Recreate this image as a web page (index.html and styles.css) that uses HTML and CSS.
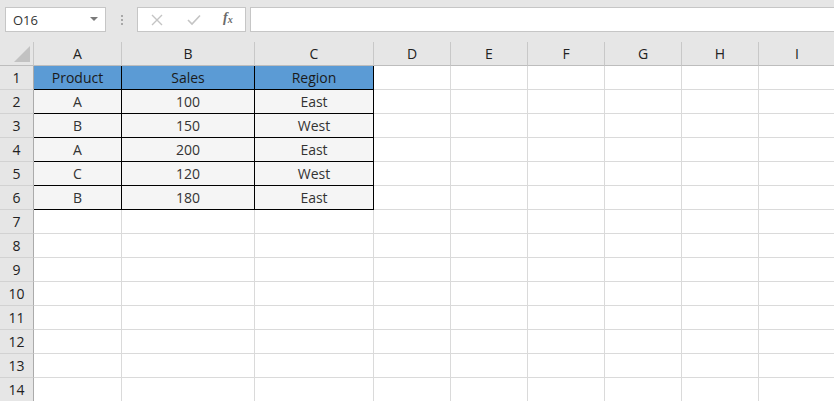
FILE: index.html
```html
<!DOCTYPE html>
<html lang="en">
<head>
    <meta charset="UTF-8">
    <meta name="viewport" content="width=device-width, initial-scale=1.0">
    <title>Book1 - Excel</title>
    <link rel="stylesheet" href="styles.css">
</head>
<body>

    <div class="formula-bar">
        <div class="name-box">
            <span>O16</span>
            <span class="caret"></span>
        </div>
        <div class="grip">
            <i></i><i></i><i></i>
        </div>
        <div class="fx-buttons">
            <svg class="fx-icon" width="12" height="12" viewBox="0 0 12 12">
                <path d="M1 1 L11 11 M11 1 L1 11" stroke="#c4c4c4" stroke-width="1.4" fill="none"/>
            </svg>
            <svg class="fx-icon" width="14" height="12" viewBox="0 0 14 12">
                <path d="M1 6 L5 10 L13 1.5" stroke="#c4c4c4" stroke-width="1.6" fill="none"/>
            </svg>
            <span class="fx">f<sub>x</sub></span>
        </div>
        <div class="formula-input"></div>
    </div>

    <div class="sheet">
        <div class="row head">
            <div class="corner"><span class="tri"></span></div>
            <div>A</div><div>B</div><div>C</div><div>D</div><div>E</div><div>F</div><div>G</div><div>H</div><div>I</div>
        </div>
        <div class="row">
            <div class="num">1</div>
            <div class="cell th">Product</div><div class="cell th">Sales</div><div class="cell th">Region</div>
            <div></div><div></div><div></div><div></div><div></div><div></div>
        </div>
        <div class="row">
            <div class="num">2</div>
            <div class="cell">A</div><div class="cell">100</div><div class="cell">East</div>
            <div></div><div></div><div></div><div></div><div></div><div></div>
        </div>
        <div class="row">
            <div class="num">3</div>
            <div class="cell">B</div><div class="cell">150</div><div class="cell">West</div>
            <div></div><div></div><div></div><div></div><div></div><div></div>
        </div>
        <div class="row">
            <div class="num">4</div>
            <div class="cell">A</div><div class="cell">200</div><div class="cell">East</div>
            <div></div><div></div><div></div><div></div><div></div><div></div>
        </div>
        <div class="row">
            <div class="num">5</div>
            <div class="cell">C</div><div class="cell">120</div><div class="cell">West</div>
            <div></div><div></div><div></div><div></div><div></div><div></div>
        </div>
        <div class="row">
            <div class="num">6</div>
            <div class="cell">B</div><div class="cell">180</div><div class="cell">East</div>
            <div></div><div></div><div></div><div></div><div></div><div></div>
        </div>
        <div class="row">
            <div class="num">7</div>
            <div></div><div></div><div></div><div></div><div></div><div></div><div></div><div></div><div></div>
        </div>
        <div class="row">
            <div class="num">8</div>
            <div></div><div></div><div></div><div></div><div></div><div></div><div></div><div></div><div></div>
        </div>
        <div class="row">
            <div class="num">9</div>
            <div></div><div></div><div></div><div></div><div></div><div></div><div></div><div></div><div></div>
        </div>
        <div class="row">
            <div class="num">10</div>
            <div></div><div></div><div></div><div></div><div></div><div></div><div></div><div></div><div></div>
        </div>
        <div class="row">
            <div class="num">11</div>
            <div></div><div></div><div></div><div></div><div></div><div></div><div></div><div></div><div></div>
        </div>
        <div class="row">
            <div class="num">12</div>
            <div></div><div></div><div></div><div></div><div></div><div></div><div></div><div></div><div></div>
        </div>
        <div class="row">
            <div class="num">13</div>
            <div></div><div></div><div></div><div></div><div></div><div></div><div></div><div></div><div></div>
        </div>
        <div class="row">
            <div class="num">14</div>
            <div></div><div></div><div></div><div></div><div></div><div></div><div></div><div></div><div></div>
        </div>
    </div>

</body>
</html>
```

FILE: styles.css
```css
* {
    margin: 0;
    padding: 0;
    box-sizing: border-box;
}

body {
    width: 834px;
    height: 401px;
    overflow: hidden;
    background: #ffffff;
    font-family: "Open Sans", "Noto Sans", sans-serif;
    font-size: 14px;
    color: #222;
}

/* formula bar */

.formula-bar {
    height: 42px;
    background: #e6e6e6;
    display: flex;
    align-items: flex-start;
    padding-top: 7px;
    padding-left: 5px;
}

.name-box {
    width: 101px;
    height: 25px;
    background: #fff;
    border: 1px solid #c6c6c6;
    display: flex;
    align-items: center;
    justify-content: space-between;
    padding: 0 7px 0 7px;
    font-size: 13px;
    color: #333;
}

.caret {
    width: 0;
    height: 0;
    border-left: 4px solid transparent;
    border-right: 4px solid transparent;
    border-top: 4px solid #7a7a7a;
    margin-top: -2px;
}

.grip {
    width: 31px;
    height: 25px;
    display: flex;
    flex-direction: column;
    align-items: center;
    justify-content: center;
    gap: 2px;
}

.grip i {
    display: block;
    width: 2px;
    height: 2px;
    background: #a8a8a8;
}

.fx-buttons {
    width: 109px;
    height: 25px;
    background: #fff;
    border: 1px solid #c6c6c6;
    display: flex;
    align-items: center;
    padding-left: 13px;
}

.fx-icon:first-child {
    margin-right: 24px;
}

.fx {
    font-family: "Liberation Serif", serif;
    font-style: italic;
    font-weight: bold;
    font-size: 14px;
    color: #6a6a6a;
    margin-left: 22px;
    margin-top: -3px;
}

.fx sub {
    font-size: 10px;
    vertical-align: -1px;
}

.formula-input {
    flex: 1;
    height: 25px;
    margin-left: 4px;
    margin-right: -2px;
    background: #fff;
    border: 1px solid #c6c6c6;
}

/* grid */

.sheet {
    width: 836px;
}

.row {
    display: grid;
    grid-template-columns: 34px 88px 133px 119px repeat(6, 77px);
    height: 24px;
}

.row > div {
    display: flex;
    align-items: center;
    justify-content: center;
    border-right: 1px solid #dadada;
    border-bottom: 1px solid #dadada;
    white-space: nowrap;
}

.head > div {
    background: #e6e6e6;
    border-right: 1px solid #c8c8c8;
    border-bottom: 1px solid #bdbdbd;
    color: #222;
}

.corner {
    position: relative;
}

.tri {
    position: absolute;
    right: 3px;
    bottom: 3px;
    width: 0;
    height: 0;
    border-left: 16px solid transparent;
    border-bottom: 16px solid #c2c2c2;
}

.row > .num {
    background: #e6e6e6;
    border-right: 1px solid #ababab;
    border-bottom: 1px solid #d2d2d2;
    color: #222;
}

.row > .cell {
    background: #f5f5f5;
    border-right: 1px solid #000;
    border-bottom: 1px solid #000;
    color: #333;
}

.row > .th {
    background: #5b9bd5;
    color: #1a1a1a;
}
```
